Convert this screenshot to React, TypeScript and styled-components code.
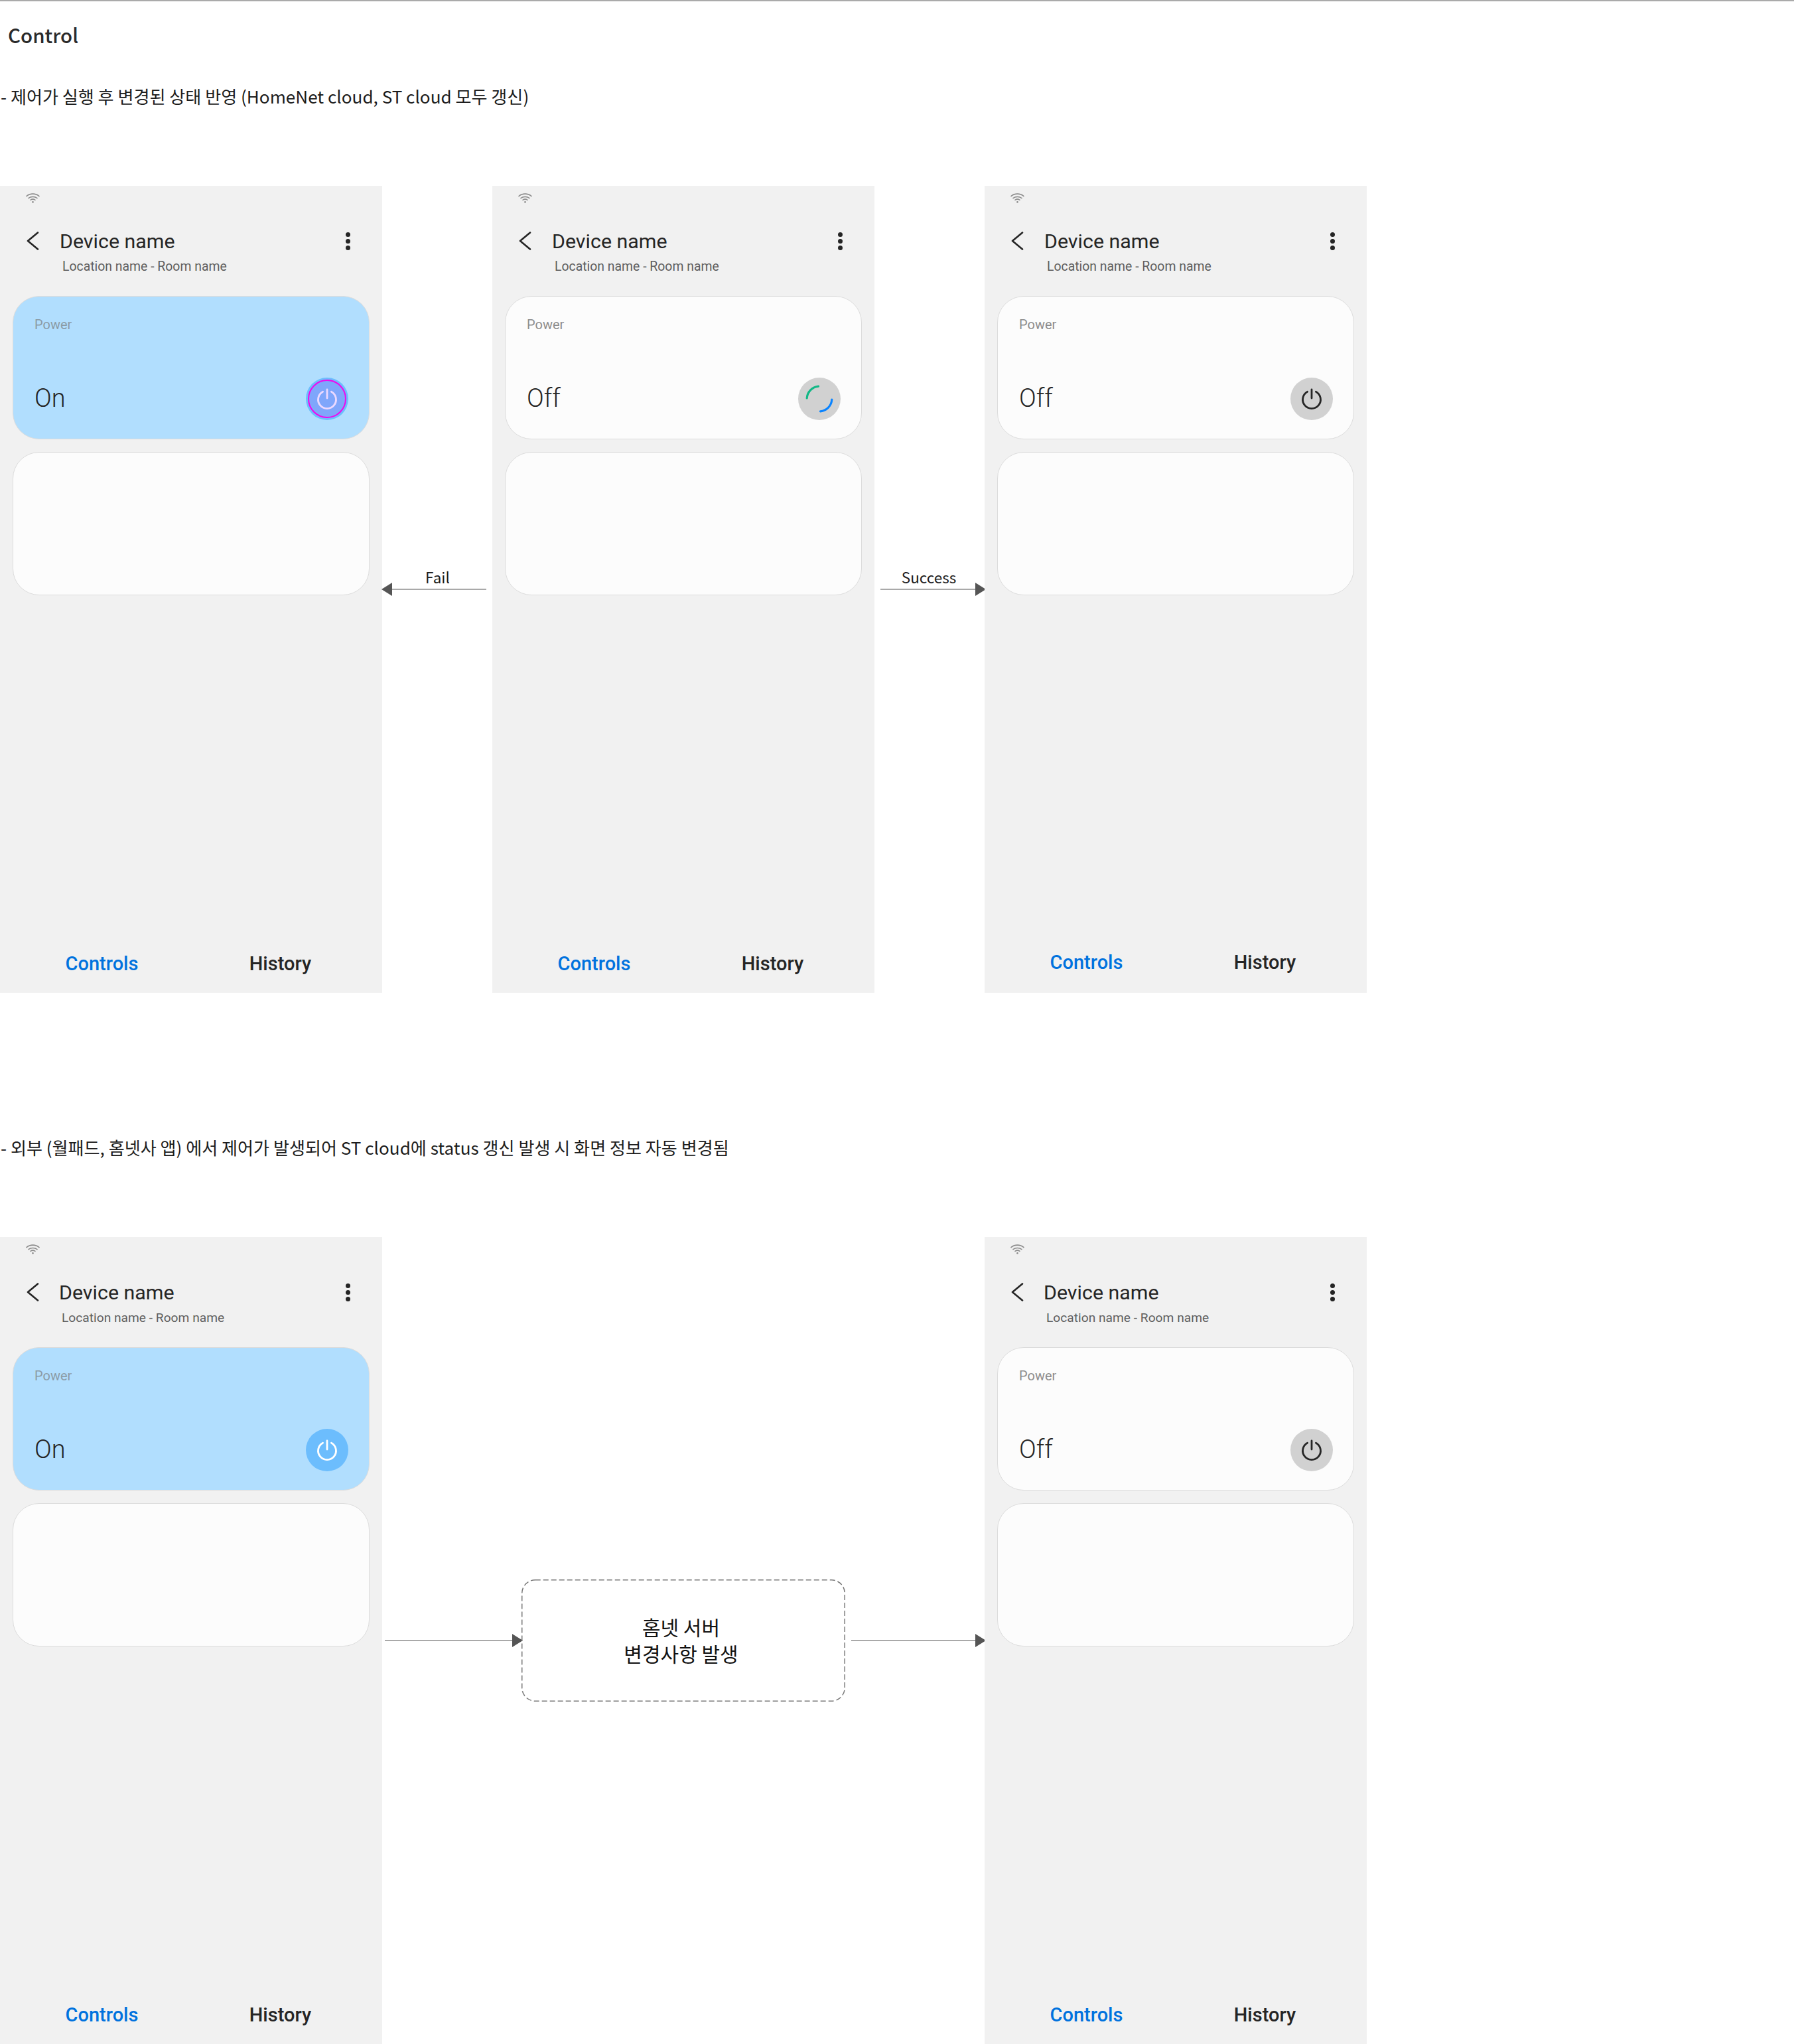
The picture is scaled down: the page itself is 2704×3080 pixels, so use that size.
import React from 'react'
import styled, { createGlobalStyle } from 'styled-components'

const GlobalStyle = createGlobalStyle`
  html, body {
    margin: 0;
    padding: 0;
    background: #fff;
  }
`

const Page = styled.div`
  width: 2704px;
  height: 3080px;
  box-sizing: border-box;
  border-top: 2px solid #aaaaaa;
  overflow: hidden;
  color: #1c1c1c;
  font-family: 'Noto Sans CJK KR', 'Noto Sans', sans-serif;
`
const PageTitle = styled.h1`
  margin: 0;
  padding: 31px 0 0 12px;
  height: 67px;
  box-sizing: border-box;
  font-size: 29.5px;
  line-height: 38px;
  font-weight: 500;
  color: #2a2a2a;
`
const Note = styled.p<{ $top: number }>`
  margin: ${(props) => props.$top}px 0 0;
  padding-left: 1px;
  height: 38px;
  font-size: 26.1px;
  line-height: 38px;
  font-weight: 400;
  white-space: nowrap;
`
const FlowRow = styled.div<{ $top: number }>`
  display: flex;
  align-items: center;
  margin-top: ${(props) => props.$top}px;
`
const Phone = styled.div`
  flex: none;
  display: flex;
  flex-direction: column;
  width: 576px;
  height: 1216px;
  background: #f1f1f1;
  font-family: Roboto, sans-serif;
`
const StatusBar = styled.div`
  height: 70px;
  box-sizing: border-box;
  padding: 11px 0 0 39px;

  svg {
    display: block;
  }
`
const AppBar = styled.div`
  display: flex;
  align-items: center;
  height: 26px;
  padding: 0 48px 0 40px;
`
const Title = styled.div<{ $narrow?: boolean }>`
  flex: 1;
  margin-left: ${(props) => (props.$narrow ? 30 : 31)}px;
  padding-top: 1px;
  font-size: 30.4px;
  line-height: 26px;
  color: #252525;
`
const MoreDots = styled.div`
  display: flex;
  flex-direction: column;
  gap: 3px;

  span {
    width: 7px;
    height: 7px;
    border-radius: 50%;
    background: #252525;
  }
`
const Subtitle = styled.div<{ $narrow?: boolean }>`
  margin: 14px 0 0 ${(props) => (props.$narrow ? 93 : 94)}px;
  font-size: ${(props) => (props.$narrow ? 19.2 : 19.4)}px;
  line-height: 24px;
  color: #5f5f5f;
`
const Cards = styled.div`
  display: flex;
  flex-direction: column;
  gap: 19px;
  margin-top: 32px;
  padding: 0 19px;
`
const Card = styled.div<{ $on?: boolean }>`
  display: flex;
  flex-direction: column;
  justify-content: space-between;
  height: 216px;
  box-sizing: border-box;
  padding: 30px 31px 28px 32px;
  border: 1px solid #dcdcdc;
  border-radius: 40px;
  background: ${(props) => (props.$on ? '#b1defe' : '#fcfcfc')};
`
const CardLabel = styled.div<{ $on?: boolean }>`
  font-size: 20px;
  line-height: 24px;
  color: ${(props) => (props.$on ? '#8b9ba6' : '#8d8d8d')};
`
const CardBottom = styled.div`
  display: flex;
  align-items: center;
  justify-content: space-between;
`
const CardValue = styled.div`
  font-size: 38px;
  line-height: 44px;
  font-weight: 300;
  color: #252525;
  margin-top: -3px;
`
const PowerButton = styled.div<{ $kind: 'on' | 'off' | 'pressed' | 'busy' }>`
  position: relative;
  display: flex;
  align-items: center;
  justify-content: center;
  width: 64px;
  height: 64px;
  border-radius: 50%;
  background: ${(props) => (props.$kind === 'on' || props.$kind === 'pressed' ? '#6cbdfd' : '#d1d1d1')};
  color: ${(props) => (props.$kind === 'on' ? '#ffffff' : props.$kind === 'pressed' ? '#ecd9ff' : '#262626')};

  ${(props) =>
    props.$kind === 'pressed' &&
    `
    &::before {
      content: '';
      position: absolute;
      inset: 3px;
      border-radius: 50%;
      border: 2px solid #f008ee;
      background: #7fa6fb;
    }
  `}

  svg {
    position: relative;
  }
`
const Tabs = styled.div<{ $raised?: boolean }>`
  display: flex;
  margin-top: auto;
  padding: 0 19px ${(props) => (props.$raised ? 26 : 24)}px;
`
const Tab = styled.div<{ $active?: boolean }>`
  flex: 1;
  text-align: center;
  font-size: 29px;
  line-height: 40px;
  font-weight: 500;
  color: ${(props) => (props.$active ? '#0072de' : '#252525')};
`
const Connector = styled.div<{ $left: number; $right: number }>`
  flex: none;
  align-self: flex-start;
  box-sizing: border-box;
  width: 166px;
  margin-top: 576px;
  padding: 0 ${(props) => props.$right}px 0 ${(props) => props.$left}px;
`
const ConnectorLabel = styled.div<{ $shift: number }>`
  height: 22px;
  margin-left: ${(props) => props.$shift}px;
  text-align: center;
  font-size: 22.5px;
  line-height: 26px;
  color: #1c1c1c;
`
const ArrowLine = styled.div<{ $width?: number; $gapLeft?: number; $gapRight?: number }>`
  display: flex;
  align-items: center;
  flex: none;
  width: ${(props) => (props.$width ? `${props.$width}px` : 'auto')};
  margin: 0 ${(props) => props.$gapRight ?? 0}px 0 ${(props) => props.$gapLeft ?? 0}px;

  svg {
    flex: none;
    display: block;
  }
`
const Stroke = styled.div`
  flex: 1;
  height: 2px;
  background: #a9a9a9;
`
const ServerStep = styled.div`
  position: relative;
  flex: none;
  display: flex;
  align-items: center;
  justify-content: center;
  width: 488px;
  height: 184px;
  box-sizing: border-box;
  padding: 0 7px 2px 0;
  text-align: center;
  font-size: 30px;
  line-height: 40px;
  color: #111;
`
const DashedOutline = styled.svg`
  position: absolute;
  inset: 0;
  width: 100%;
  height: 100%;
`

const WifiIcon = () => (
  <svg width="21" height="15" viewBox="0 0 21 15" fill="none" stroke="#8b8b8b" strokeWidth="1.6" strokeLinecap="round">
    <path d="M1 4.6C6.4 0 14.6 0 20 4.6" />
    <path d="M4 7.6C7.7 4.7 13.3 4.7 17 7.6" />
    <path d="M7 10.4C9 9 12 9 14 10.4" />
    <circle cx="10.5" cy="13.4" r="1.3" fill="#8b8b8b" stroke="none" />
  </svg>
)

const BackIcon = () => (
  <svg width="19" height="28" viewBox="0 0 19 28" fill="none" stroke="#252525" strokeWidth="2.6" strokeLinecap="round" strokeLinejoin="round">
    <path d="M17 1.5L2 14L17 26.5" />
  </svg>
)

const PowerIcon = () => (
  <svg width="32" height="32" viewBox="0 0 32 32" fill="none" stroke="currentColor" strokeWidth="2.8" strokeLinecap="round">
    <path d="M9.6 5.2A13.5 13.5 0 1 0 22.4 5.2" />
    <path d="M16 2V15" />
  </svg>
)

const SpinnerIcon = () => (
  <svg width="44" height="44" viewBox="0 0 44 44" fill="none" strokeWidth="3.2" strokeLinecap="round">
    <path d="M3.2 21A19 19 0 0 1 20.5 3.2" stroke="#12b886" />
    <path d="M40.8 23A19 19 0 0 1 23.5 40.8" stroke="#0a84ff" />
  </svg>
)

const ArrowHead = ({ flip }: { flip?: boolean }) => (
  <svg width="16" height="20" viewBox="0 0 16 20">
    <path d={flip ? 'M16 0V20L0 10Z' : 'M0 0V20L16 10Z'} fill="#555555" />
  </svg>
)

type ScreenProps = {
  power: 'on' | 'off' | 'pressed' | 'busy'
  narrow?: boolean
  raisedTabs?: boolean
}

const Screen = ({ power, narrow, raisedTabs }: ScreenProps) => {
  const isOn = power === 'on' || power === 'pressed'
  return (
    <Phone>
      <StatusBar>
        <WifiIcon />
      </StatusBar>
      <AppBar>
        <BackIcon />
        <Title $narrow={narrow}>Device name</Title>
        <MoreDots>
          <span />
          <span />
          <span />
        </MoreDots>
      </AppBar>
      <Subtitle $narrow={narrow}>Location name - Room name</Subtitle>
      <Cards>
        <Card $on={isOn}>
          <CardLabel $on={isOn}>Power</CardLabel>
          <CardBottom>
            <CardValue>{isOn ? 'On' : 'Off'}</CardValue>
            <PowerButton $kind={power}>{power === 'busy' ? <SpinnerIcon /> : <PowerIcon />}</PowerButton>
          </CardBottom>
        </Card>
        <Card />
      </Cards>
      <Tabs $raised={raisedTabs}>
        <Tab $active>Controls</Tab>
        <Tab>History</Tab>
      </Tabs>
    </Phone>
  )
}

export default function App() {
  return (
    <Page>
      <GlobalStyle />
      <PageTitle>Control</PageTitle>
      <Note $top={57}>- 제어가 실행 후 변경된 상태 반영 (HomeNet cloud, ST cloud 모두 갱신)</Note>
      <FlowRow $top={116}>
        <Screen power="pressed" />
        <Connector $left={0} $right={9}>
          <ConnectorLabel $shift={10}>Fail</ConnectorLabel>
          <ArrowLine $gapLeft={-1}>
            <ArrowHead flip />
            <Stroke />
          </ArrowLine>
        </Connector>
        <Screen power="busy" />
        <Connector $left={9} $right={0}>
          <ConnectorLabel $shift={-11}>Success</ConnectorLabel>
          <ArrowLine $gapRight={-2}>
            <Stroke />
            <ArrowHead />
          </ArrowLine>
        </Connector>
        <Screen power="off" raisedTabs />
      </FlowRow>
      <Note $top={214}>- 외부 (월패드, 홈넷사 앱) 에서 제어가 발생되어 ST cloud에 status 갱신 발생 시 화면 정보 자동 변경됨</Note>
      <FlowRow $top={116}>
        <Screen power="on" narrow />
        <ArrowLine $width={208} $gapLeft={4} $gapRight={-2}>
          <Stroke />
          <ArrowHead />
        </ArrowLine>
        <ServerStep>
          <DashedOutline viewBox="0 0 488 184" fill="none">
            <rect x="0.75" y="0.75" width="486.5" height="182.5" rx="20" stroke="#777777" strokeWidth="1.5" strokeDasharray="8 4" />
          </DashedOutline>
          <span>
            홈넷 서버
            <br />
            변경사항 발생
          </span>
        </ServerStep>
        <ArrowLine $width={203} $gapLeft={9} $gapRight={-2}>
          <Stroke />
          <ArrowHead />
        </ArrowLine>
        <Screen power="off" narrow />
      </FlowRow>
    </Page>
  )
}
